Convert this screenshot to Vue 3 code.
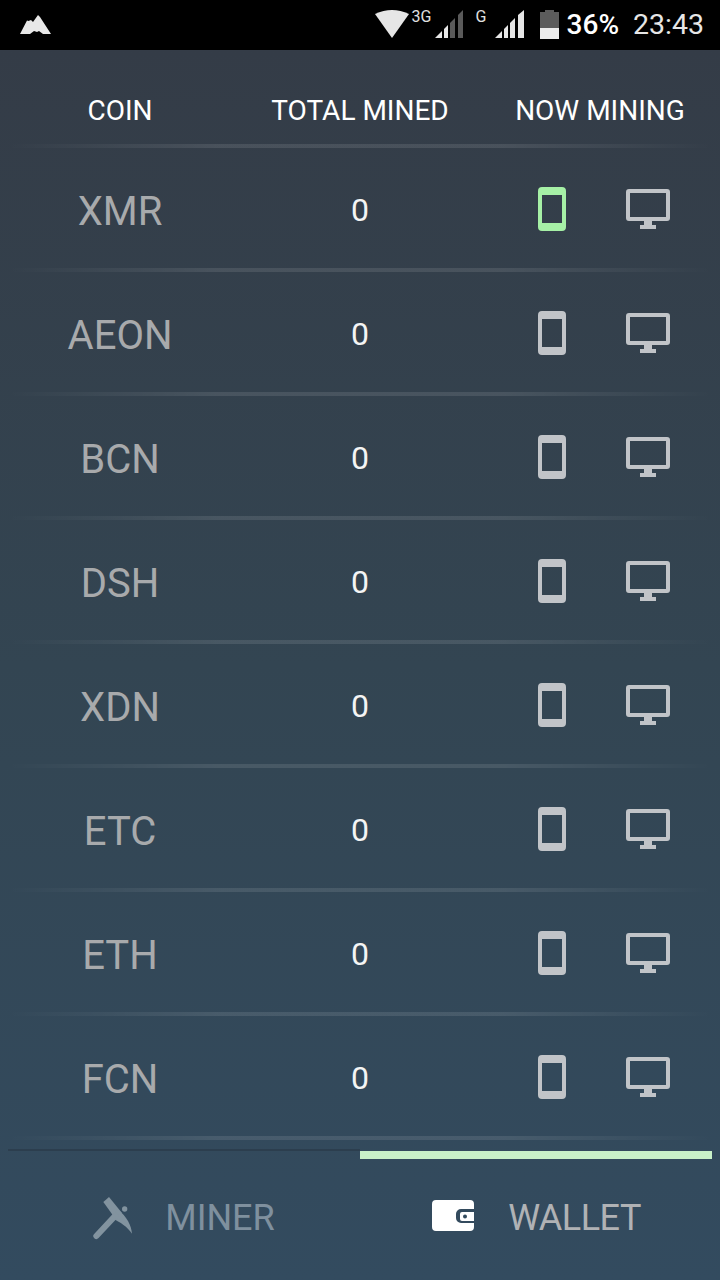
<script setup>
const coins = ['XMR', 'AEON', 'BCN', 'DSH', 'XDN', 'ETC', 'ETH', 'FCN']
</script>

<template>
  <div class="screen">
    <div class="status">
      <svg class="logo" width="32" height="20" viewBox="0 0 32 20">
        <path d="M0 19 L7 5.5 L8.5 6 L11 5 L13 7 L18 0 L20 2 L31 19 L23 19 L19 16 L17 17 L14 16 L10 19 Z" fill="#e8e8e8"/>
      </svg>
      <div class="status-right">
        <svg class="wifi" width="34" height="28" viewBox="0 0 34 28">
          <path d="M0 4 Q17 -4 34 4 L17 28 Z" fill="#e6e6e6"/>
        </svg>
        <span class="net net-3g">3G</span>
        <svg class="sig sig-a" width="29" height="28" viewBox="0 0 29 28">
          <polygon points="0,28 7,21 7,28" fill="#e6e6e6"/>
          <polygon points="9,19 13,15 13,28 9,28" fill="#e6e6e6"/>
          <polygon points="15,13 20,8 20,28 15,28" fill="#5a5a5a"/>
          <polygon points="23,5 28,0 28,28 23,28" fill="#5a5a5a"/>
        </svg>
        <span class="net net-g">G</span>
        <svg class="sig sig-b" width="29" height="28" viewBox="0 0 29 28">
          <polygon points="0,28 7,21 7,28" fill="#e6e6e6"/>
          <polygon points="9,19 13,15 13,28 9,28" fill="#e6e6e6"/>
          <polygon points="15,13 20,8 20,28 15,28" fill="#e6e6e6"/>
          <polygon points="23,5 29,0 29,28 23,28" fill="#e6e6e6"/>
        </svg>
        <svg class="batt" width="19" height="29" viewBox="0 0 19 29">
          <path d="M5 0 H14 V2 H19 V29 H0 V2 H5 Z" fill="#5c5c5c"/>
          <rect x="0" y="18" width="19" height="11" fill="#ececec"/>
        </svg>
        <span class="pct">36%</span>
        <span class="time">23:43</span>
      </div>
    </div>

    <div class="body">
      <div class="head">
        <div class="col">COIN</div>
        <div class="col">TOTAL MINED</div>
        <div class="col">NOW MINING</div>
      </div>
      <div class="rule"></div>
      <template v-for="(coin, i) in coins" :key="coin">
        <div class="row">
          <div class="col coin">{{ coin }}</div>
          <div class="col total">0</div>
          <div class="col devices">
            <svg class="phone" :class="{ on: i === 0 }" width="28" height="44" viewBox="0 0 28 44">
              <path fill-rule="evenodd" d="M4 0 H24 A4 4 0 0 1 28 4 V40 A4 4 0 0 1 24 44 H4 A4 4 0 0 1 0 40 V4 A4 4 0 0 1 4 0 Z M4 8 V36 H24 V8 Z"/>
            </svg>
            <svg class="monitor" width="44" height="40" viewBox="0 0 44 40">
              <path fill-rule="evenodd" d="M3 0 H41 A3 3 0 0 1 44 3 V29 A3 3 0 0 1 41 32 H26 V36 H30 V40 H14 V36 H18 V32 H3 A3 3 0 0 1 0 29 V3 A3 3 0 0 1 3 0 Z M4 4 V28 H40 V4 Z"/>
            </svg>
          </div>
        </div>
        <div class="rule"></div>
      </template>

      <div class="tabs">
        <div class="tab">
          <svg width="41" height="44" viewBox="276 219 123 132">
            <g fill="#82939f">
              <polygon points="310,237 327,222 366,270 346,287"/>
              <path d="M352 258 C382 282 394 308 396 332 C382 312 362 298 336 286 Z"/>
              <circle cx="374" cy="258" r="8"/>
            </g>
            <line x1="289" y1="339" x2="346" y2="278" stroke="#82939f" stroke-width="18" stroke-linecap="round"/>
          </svg>
          <span class="tab-label miner">MINER</span>
        </div>
        <div class="tab active">
          <svg class="wallet-icon" width="42" height="31" viewBox="0 0 42 31">
            <path fill-rule="evenodd" d="M4 0 H38 A4 4 0 0 1 42 4 V9 H29 A5 5 0 0 0 24 14 V18 A5 5 0 0 0 29 23 H42 V27 A4 4 0 0 1 38 31 H4 A4 4 0 0 1 0 27 V4 A4 4 0 0 1 4 0 Z" fill="#fff"/>
            <path fill-rule="evenodd" d="M30 12 H43 V21 H30 A2 2 0 0 1 28 19 V14 A2 2 0 0 1 30 12 Z M33 14.5 A2 2 0 1 0 33 18.5 A2 2 0 1 0 33 14.5 Z" fill="#fff"/>
          </svg>
          <span class="tab-label wallet">WALLET</span>
        </div>
      </div>
    </div>
  </div>
</template>

<style scoped>
.screen {
  width: 720px;
  height: 1280px;
  display: flex;
  flex-direction: column;
  overflow: hidden;
  font-family: Roboto, "Liberation Sans", sans-serif;
}
.status {
  height: 50px;
  flex: none;
  background: #000;
  display: flex;
  align-items: flex-start;
  justify-content: space-between;
  padding: 0 16px 0 20px;
  box-sizing: border-box;
}
.logo { margin-top: 15px; }
.status-right {
  display: flex;
  align-items: flex-start;
  height: 50px;
}
.wifi { margin-top: 10px; }
.net {
  font-size: 16px;
  line-height: 15px;
  color: #e0e0e0;
  margin-top: 9px;
}
.net-3g { margin-left: 3px; width: 21px; }
.sig { margin-top: 10px; }
.sig-a { margin-left: 2px; }
.net-g { margin-left: 12px; width: 19px; }
.batt { margin-top: 10px; margin-left: 16px; }
.pct {
  font-size: 28px;
  line-height: 50px;
  font-weight: 500;
  color: #fff;
  margin-left: 8px;
}
.time {
  font-size: 28.5px;
  line-height: 50px;
  color: #e6e6e6;
  margin-left: 14px;
}
.body {
  flex: 1;
  display: flex;
  flex-direction: column;
  background: linear-gradient(180deg, #343c47 0%, #334552 50%, #334b5f 100%);
}
.head {
  height: 94px;
  flex: none;
  display: flex;
  align-items: center;
  padding-top: 27px;
  box-sizing: border-box;
  color: #fff;
  font-size: 28px;
}
.col {
  width: 240px;
  flex: none;
  text-align: center;
}
.rule {
  height: 4px;
  flex: none;
  background: linear-gradient(90deg, rgba(255,255,255,0) 1%, rgba(255,255,255,0.1) 30%, rgba(255,255,255,0.1) 70%, rgba(255,255,255,0) 99%);
}
.row {
  height: 120px;
  flex: none;
  display: flex;
  align-items: center;
  padding-top: 2px;
  box-sizing: border-box;
}
.coin {
  font-size: 40px;
  color: #a8aaac;
  margin-top: 4px;
}
.total {
  font-size: 32px;
  color: #f4f4f4;
  margin-top: 2px;
}
.devices {
  display: flex;
  align-items: center;
  padding-left: 58px;
  box-sizing: border-box;
  gap: 60px;
}
.phone { fill: #c1c4c8; }
.phone.on { fill: #a6f0a6; }
.monitor { fill: #c1c4c8; }
.tabs {
  flex: 1;
  display: flex;
  padding: 9px 8px 0;
}
.tab {
  flex: 1;
  display: flex;
  align-items: center;
  justify-content: center;
  gap: 32px;
  border-top: 2px solid #2c3e4e;
  box-sizing: border-box;
  padding: 4px 1px 0 0;
}
.tab.active {
  border-top: 8px solid #c8f1c8;
  margin-top: 2px;
  gap: 34px;
  padding: 0 0 4px 1px;
}
.wallet-icon { margin-top: -4px; }
.tab-label { font-size: 36px; }
.miner { color: #7f909e; }
.wallet { color: #b0b2b5; letter-spacing: -0.5px; }
</style>

<style>
html, body { margin: 0; background: #000; }
</style>
